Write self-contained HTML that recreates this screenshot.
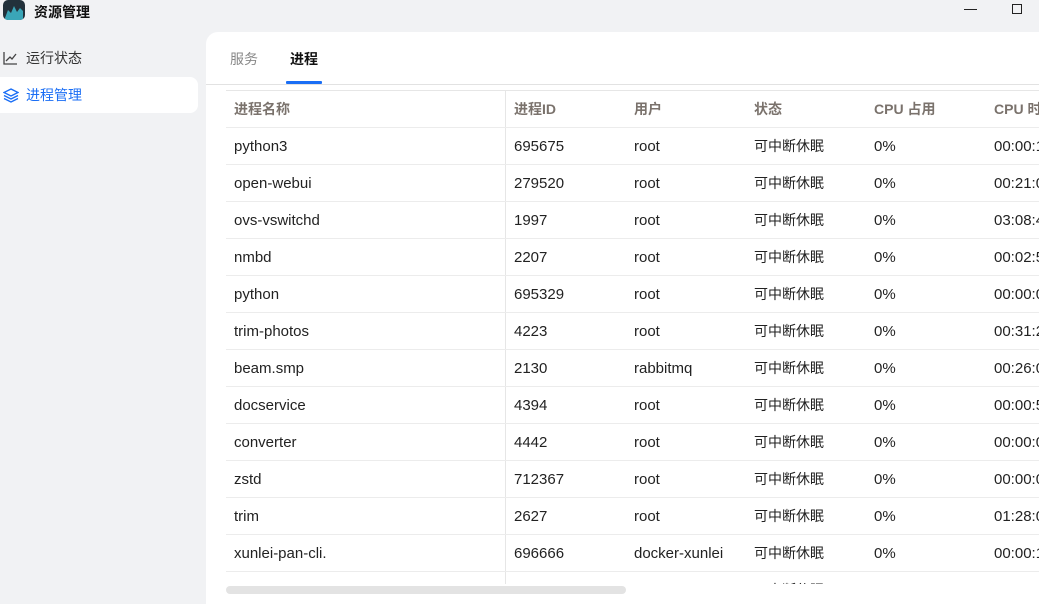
<!DOCTYPE html><html><head><meta charset="utf-8"><style>
*{margin:0;padding:0;box-sizing:border-box}
body{width:1039px;height:604px;overflow:hidden;background:#f1f2f4;font-family:"Liberation Sans","Noto Sans CJK SC",sans-serif;font-size:14px;color:#222;position:relative}
.logo{position:absolute;left:3px;top:0;width:22px;height:20px;border-radius:5px;background:#22313b;overflow:hidden}
.title{position:absolute;left:34px;top:2px;font-size:14px;font-weight:bold;color:#111}
.min{position:absolute;left:964px;top:9px;width:13px;height:1px;background:#222}
.max{position:absolute;left:1012px;top:4px;width:10px;height:10px;border:1px solid #222}
.nav{position:absolute;left:0;width:198px;height:36px;font-size:14px;line-height:36px;padding-left:26px;color:#333}
.nav.act{background:#fff;border-radius:0 8px 8px 0;color:#1a6ef5}
.nav svg{position:absolute;left:3px;top:11px}
.panel{position:absolute;left:206px;top:32px;width:833px;height:572px;background:#fff;border-top-left-radius:12px}
.tab{position:absolute;top:17px;font-size:14px;color:#888}
.tabline{position:absolute;left:0;right:0;top:52px;height:1px;background:#e2e2e2}
.ul{position:absolute;left:80px;top:49px;width:36px;height:3px;background:#1a6ef5;border-radius:1px}
.tbl{position:absolute;left:20px;top:58px;width:813px;height:494px;overflow:hidden;border-top:1px solid #e6e6e6}
.row{position:relative;height:37px;border-bottom:1px solid #ececec;line-height:38px;white-space:nowrap;font-size:15px}
.row span{position:absolute;top:0}
.row span.c{font-size:14px;line-height:36px}
.hd{color:#7a726c;font-weight:bold;font-size:14px;line-height:36px}
.vl{position:absolute;left:279px;top:0;bottom:0;width:1px;background:#e6e6e6}
.sb{position:absolute;left:20px;top:554px;width:400px;height:8px;border-radius:4px;background:#e3e3e3}
</style></head><body>
<div class="logo"><svg width="22" height="20"><path d="M2 18 L5 10 L8 13 L11 6 L14 12 L17 8 L20 11 L20 20 L2 20Z" fill="#3aa6b8"/></svg></div>
<div class="title">资源管理</div>
<div class="min"></div><div class="max"></div>
<div class="nav" style="top:40px"><svg width="15" height="14" fill="none" stroke="#444" stroke-width="1.3"><path d="M1 1V13H14"/><path d="M3 10L7 6L9 8L13 3"/></svg>运行状态</div>
<div class="nav act" style="top:77px"><svg width="16" height="15" fill="none" stroke="#1a6ef5" stroke-width="1.4"><path d="M8 1L15 4.5L8 8L1 4.5Z"/><path d="M1 7.5L8 11L15 7.5"/><path d="M1 10.5L8 14L15 10.5"/></svg>进程管理</div>
<div class="panel">
<div class="tab" style="left:24px">服务</div>
<div class="tab" style="left:84px;color:#111;font-weight:bold">进程</div>
<div class="ul"></div>
<div class="tabline"></div>
<div class="tbl">
<div class="vl"></div>
<div class="row hd"><span style="left:8px">进程名称</span><span style="left:288px">进程ID</span><span style="left:408px">用户</span><span style="left:528px">状态</span><span style="left:648px">CPU 占用</span><span style="left:768px">CPU 时间</span></div>
<div class="row"><span style="left:8px">python3</span><span style="left:288px">695675</span><span style="left:408px">root</span><span class="c" style="left:528px">可中断休眠</span><span style="left:648px">0%</span><span style="left:768px">00:00:12</span></div>
<div class="row"><span style="left:8px">open-webui</span><span style="left:288px">279520</span><span style="left:408px">root</span><span class="c" style="left:528px">可中断休眠</span><span style="left:648px">0%</span><span style="left:768px">00:21:04</span></div>
<div class="row"><span style="left:8px">ovs-vswitchd</span><span style="left:288px">1997</span><span style="left:408px">root</span><span class="c" style="left:528px">可中断休眠</span><span style="left:648px">0%</span><span style="left:768px">03:08:47</span></div>
<div class="row"><span style="left:8px">nmbd</span><span style="left:288px">2207</span><span style="left:408px">root</span><span class="c" style="left:528px">可中断休眠</span><span style="left:648px">0%</span><span style="left:768px">00:02:59</span></div>
<div class="row"><span style="left:8px">python</span><span style="left:288px">695329</span><span style="left:408px">root</span><span class="c" style="left:528px">可中断休眠</span><span style="left:648px">0%</span><span style="left:768px">00:00:05</span></div>
<div class="row"><span style="left:8px">trim-photos</span><span style="left:288px">4223</span><span style="left:408px">root</span><span class="c" style="left:528px">可中断休眠</span><span style="left:648px">0%</span><span style="left:768px">00:31:22</span></div>
<div class="row"><span style="left:8px">beam.smp</span><span style="left:288px">2130</span><span style="left:408px">rabbitmq</span><span class="c" style="left:528px">可中断休眠</span><span style="left:648px">0%</span><span style="left:768px">00:26:01</span></div>
<div class="row"><span style="left:8px">docservice</span><span style="left:288px">4394</span><span style="left:408px">root</span><span class="c" style="left:528px">可中断休眠</span><span style="left:648px">0%</span><span style="left:768px">00:00:55</span></div>
<div class="row"><span style="left:8px">converter</span><span style="left:288px">4442</span><span style="left:408px">root</span><span class="c" style="left:528px">可中断休眠</span><span style="left:648px">0%</span><span style="left:768px">00:00:04</span></div>
<div class="row"><span style="left:8px">zstd</span><span style="left:288px">712367</span><span style="left:408px">root</span><span class="c" style="left:528px">可中断休眠</span><span style="left:648px">0%</span><span style="left:768px">00:00:01</span></div>
<div class="row"><span style="left:8px">trim</span><span style="left:288px">2627</span><span style="left:408px">root</span><span class="c" style="left:528px">可中断休眠</span><span style="left:648px">0%</span><span style="left:768px">01:28:04</span></div>
<div class="row"><span style="left:8px">xunlei-pan-cli.</span><span style="left:288px">696666</span><span style="left:408px">docker-xunlei</span><span class="c" style="left:528px">可中断休眠</span><span style="left:648px">0%</span><span style="left:768px">00:00:16</span></div>
<div class="row"><span style="left:8px">python3</span><span style="left:288px">695981</span><span style="left:408px">root</span><span class="c" style="left:528px">可中断休眠</span><span style="left:648px">0%</span><span style="left:768px">00:00:10</span></div>
</div>
<div class="sb"></div>
</div>
</body></html>
